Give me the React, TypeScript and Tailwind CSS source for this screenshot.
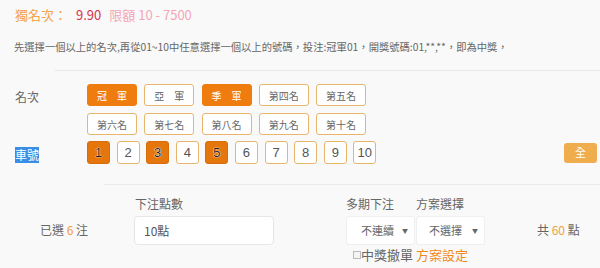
import React from "react";

const ranks = ["冠　軍", "亞　軍", "季　軍", "第四名", "第五名", "第六名", "第七名", "第八名", "第九名", "第十名"];
const selRanks = [0, 2];
const selNums = [1, 3, 5];

export default function App() {
  return (
    <div className="w-[600px] h-[268px] bg-[#f9f9f9] overflow-hidden font-['Microsoft_JhengHei','Noto_Sans_CJK_TC',sans-serif] text-[#666]">
      <div className="pl-[15px] pt-[7px] h-[23px] text-[13px] leading-[16px] flex items-center">
        <span className="text-[#f4a24c]">獨名次：</span>
        <span className="ml-[9px] text-[#d9344c]">9.90</span>
        <span className="ml-[8px] text-[#f3a6b6]">限額 10 - 7500</span>
      </div>
      <div className="mt-[16px] pl-[14px] text-[10.3px] leading-[16px] text-[#666] whitespace-nowrap">
        先選擇一個以上的名次,再從01~10中任意選擇一個以上的號碼，投注:冠軍01，開獎號碼:01,**,**，即為中獎，
      </div>
      <div className="mt-[15px] ml-[55px] border-t border-[#e8e8e8]" />
      <div className="flex mt-[13px]">
        <div className="w-[87px] pl-[15px] text-[12px] leading-[22px] pt-[2px]">名次</div>
        <div className="grid grid-cols-5 gap-x-[7.25px] gap-y-[7px]">
          {ranks.map((r, i) => {
            const s = selRanks.includes(i);
            return (
              <div
                key={r}
                className={
                  "w-[50px] h-[22px] rounded-[3px] border flex items-center justify-center text-[10px] " +
                  (s ? "bg-[#ef7c0e] border-[#ef7c0e] text-white" : "bg-white border-[#e8b56c] text-[#666]")
                }
              >
                {r}
              </div>
            );
          })}
        </div>
      </div>
      <div className="flex mt-[6px] items-center h-[23px]">
        <div className="w-[87px] pl-[15px]">
          <span className="bg-[#3a8ee6] text-white text-[12px] leading-[16px] inline-block">車號</span>
        </div>
        <div className="flex gap-[6.6px]">
          {Array.from({ length: 10 }, (_, i) => i + 1).map((n) => {
            const s = selNums.includes(n);
            return (
              <div
                key={n}
                className={
                  "w-[23px] h-[23px] rounded-[3px] border flex items-center justify-center text-[13px] font-['Liberation_Sans',sans-serif] " +
                  (s
                    ? "bg-[#e5760c] border-[#d86c08] text-[#222] [text-shadow:0_0_1px_#fff,0_0_1px_#fff,0_0_1px_#fff]"
                    : "bg-white border-[#e8b56c] text-[#555]")
                }
              >
                {n}
              </div>
            );
          })}
        </div>
        <div className="ml-auto mr-[3px] w-[33px] h-[20px] rounded-[3px] bg-[#f0ad4e] text-white text-[11px] flex items-center justify-center">
          全
        </div>
      </div>
      <div className="mt-[20px] ml-[104px] border-t border-[#eaeaea]" />
      <div className="flex mt-[12px] text-[12px]">
        <div className="w-[134px] pl-[40px] pt-[25px] leading-[16px]">
          已選 <span className="text-[#f0a040]">6</span> 注
        </div>
        <div className="w-[140px]">
          <div className="leading-[14px] h-[19px] pl-[1px]">下注點數</div>
          <div className="h-[29px] bg-white border border-[#e6e6e6] rounded-[4px] flex items-center pl-[9px] text-[12px] text-[#555]">
            10點
          </div>
        </div>
        <div className="ml-[72px] w-[140px]">
          <div className="flex leading-[14px] h-[19px]">
            <div className="w-[70px]">多期下注</div>
            <div>方案選擇</div>
          </div>
          <div className="flex gap-[1px]">
            <div className="w-[69px] h-[29px] bg-white border border-[#efefef] rounded-[3px] flex items-center text-[11px] text-[#666]">
              <span className="ml-[14px]">不連續</span>
              <span className="ml-auto mr-[6px] text-[6px]">▼</span>
            </div>
            <div className="w-[69px] h-[29px] bg-white border border-[#efefef] rounded-[3px] flex items-center text-[11px] text-[#666]">
              <span className="ml-[12px]">不選擇</span>
              <span className="ml-auto mr-[6px] text-[6px]">▼</span>
            </div>
          </div>
          <div className="flex items-center mt-[2px] h-[16px] text-[13px]">
            <div className="w-[70px] flex items-center pl-[7px]">
              <span className="w-[8px] h-[8px] border border-[#bbb] bg-[#f4f4f4] inline-block" />
              <span className="ml-[0px]">中獎撤單</span>
            </div>
            <div className="text-[#f08a1c]">方案設定</div>
          </div>
        </div>
        <div className="ml-[51px] pt-[25px] leading-[16px]">
          共 <span className="text-[#f0a040]">60</span> 點
        </div>
      </div>
    </div>
  );
}
